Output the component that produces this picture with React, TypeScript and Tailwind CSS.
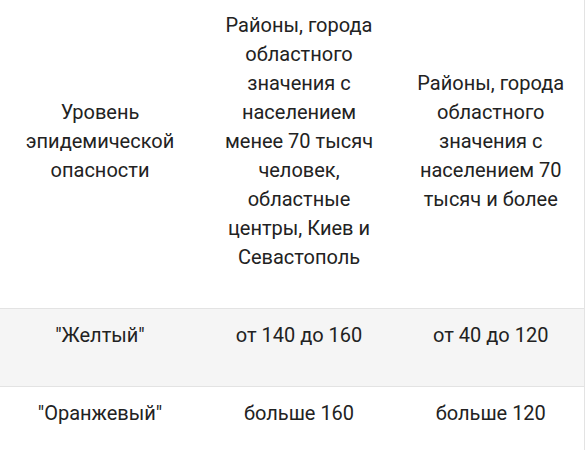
import React from "react";

const rows = [
  { level: "\"Желтый\"", small: "от 140 до 160", big: "от 40 до 120", shaded: true },
  { level: "\"Оранжевый\"", small: "больше 160", big: "больше 120", shaded: false },
];

export default function App() {
  return (
    <div className="w-[586px] h-[450px] overflow-hidden bg-white font-['Roboto',sans-serif] text-[20px] leading-[29px] text-[#222]">
      <table className="w-[584px] table-fixed border-collapse border-r border-[#e3e3e3]">
        <colgroup>
          <col className="w-[200px]" />
          <col className="w-[198px]" />
          <col className="w-[186px]" />
        </colgroup>
        <thead>
          <tr className="border-b border-[#e3e3e3]">
            <th className="px-[19px] pt-[11px] pb-[36px] text-center align-middle font-normal">
              Уровень эпидемической опасности
            </th>
            <th className="px-[19px] pt-[11px] pb-[36px] text-center align-middle font-normal">
              Районы, города областного значения с населением менее 70 тысяч человек, областные центры, Киев и Севастополь
            </th>
            <th className="px-[19px] pt-[11px] pb-[36px] text-center align-middle font-normal">
              Районы, города областного значения с населением 70 тысяч и более
            </th>
          </tr>
        </thead>
        <tbody>
          {rows.map((r) => (
            <tr
              key={r.level}
              className={r.shaded ? "border-b border-[#e3e3e3] bg-[#f5f5f5]" : "border-b border-[#e3e3e3]"}
            >
              <td className="px-[19px] pt-3 pb-[36px] text-center align-middle">{r.level}</td>
              <td className="px-[19px] pt-3 pb-[36px] text-center align-middle">{r.small}</td>
              <td className="px-[19px] pt-3 pb-[36px] text-center align-middle">{r.big}</td>
            </tr>
          ))}
        </tbody>
      </table>
    </div>
  );
}
